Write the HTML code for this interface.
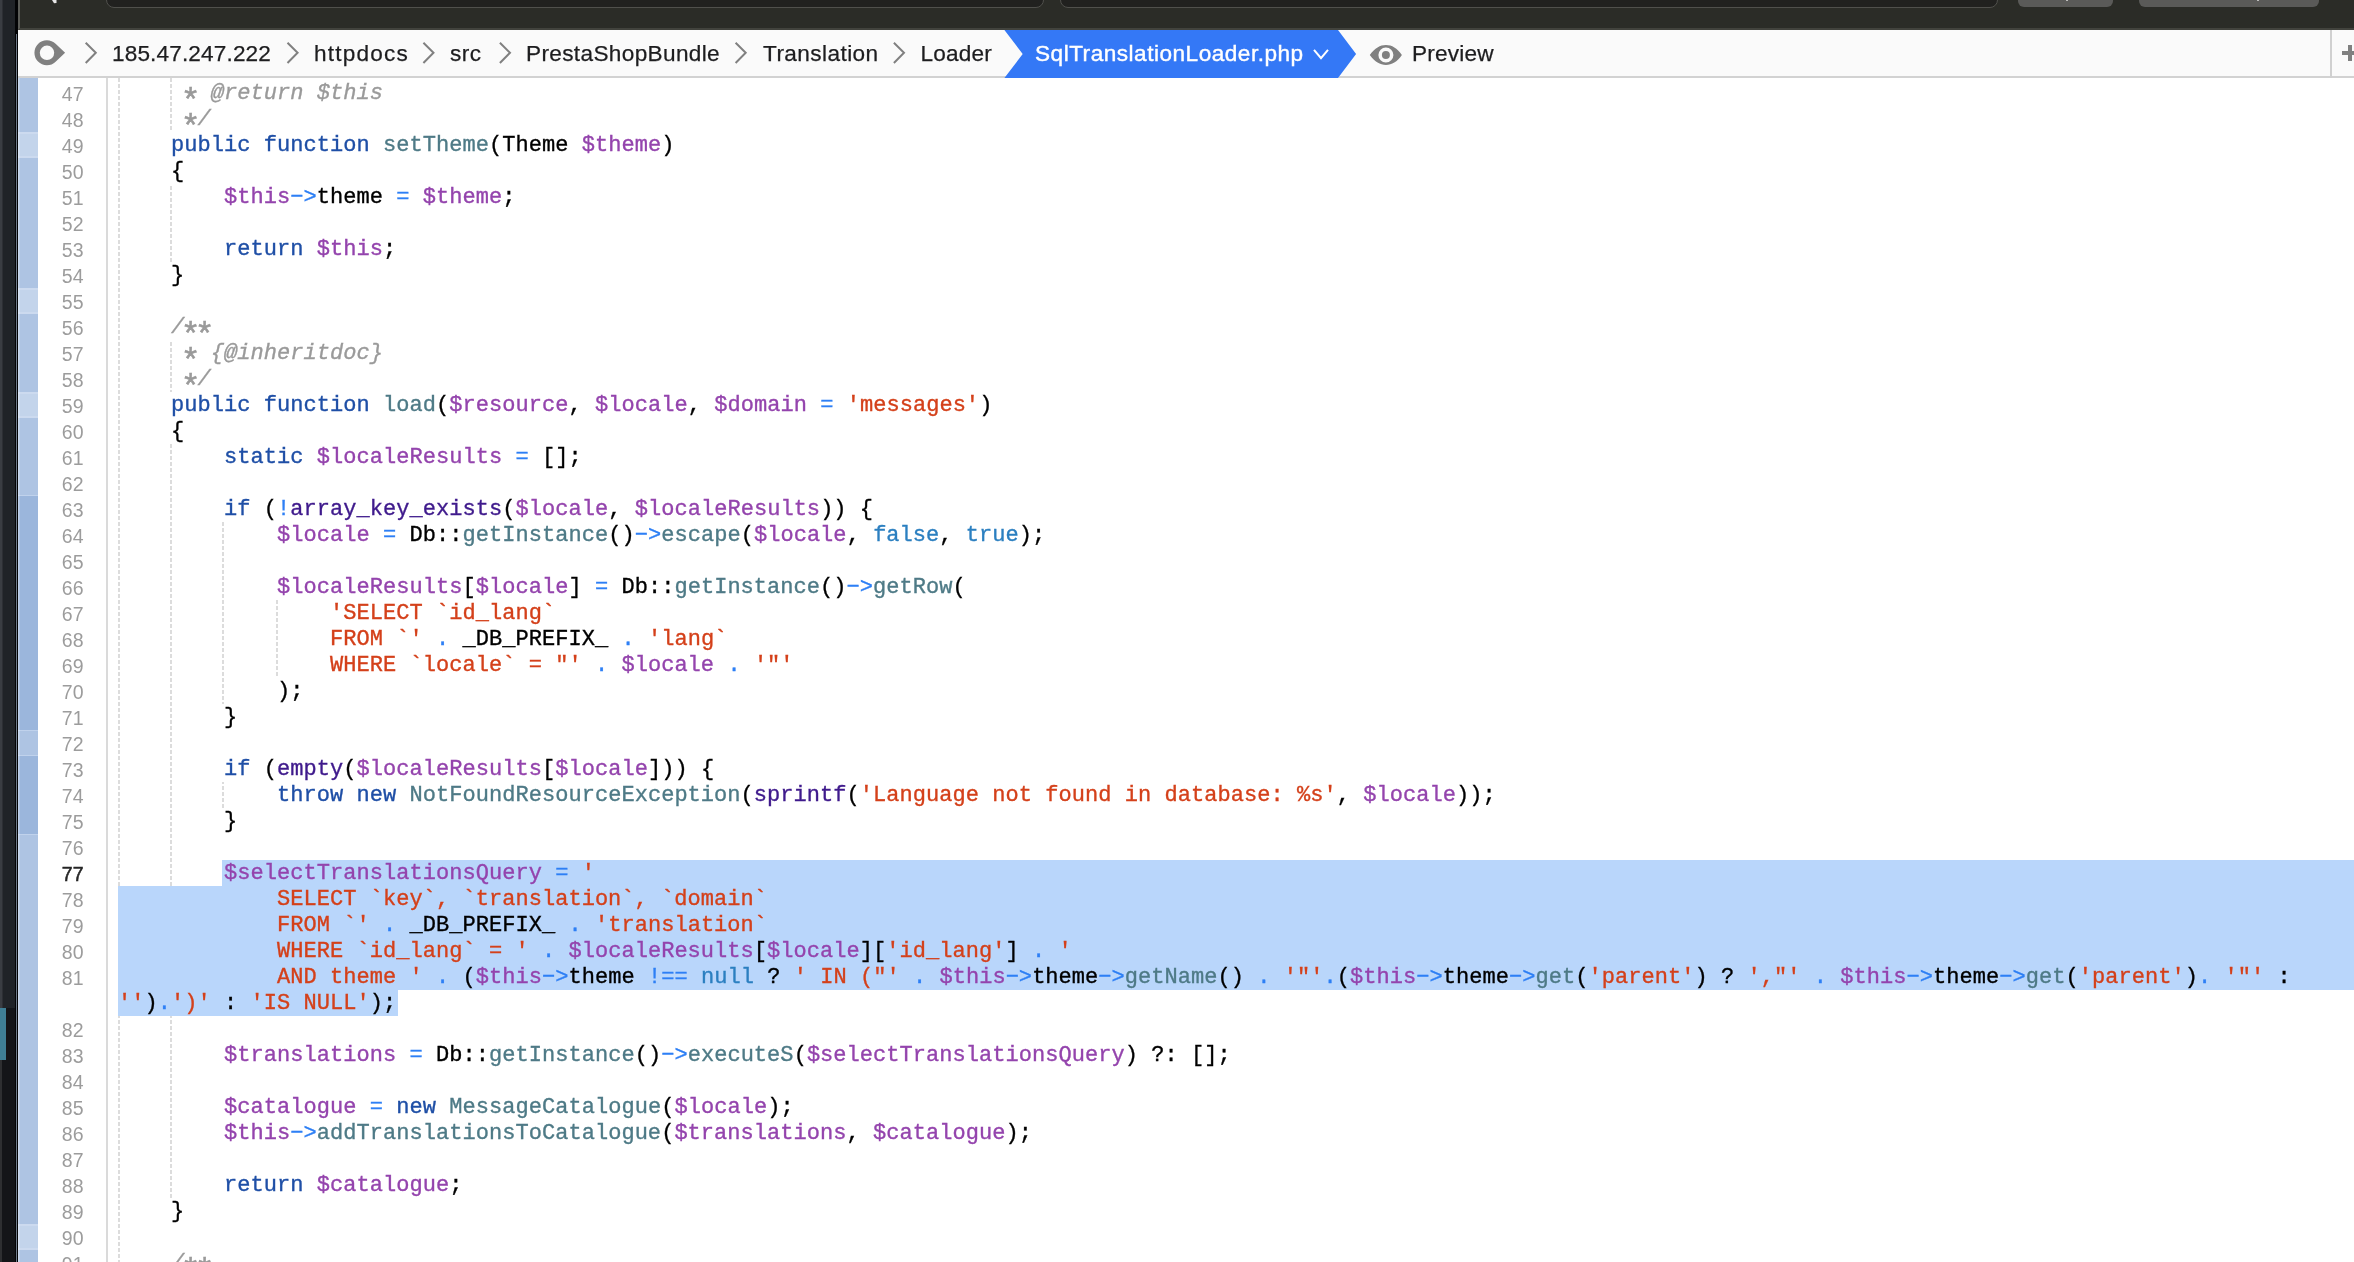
<!DOCTYPE html>
<html><head><meta charset="utf-8"><title>SqlTranslationLoader.php</title>
<style>
*{margin:0;padding:0;box-sizing:border-box}
html,body{width:2354px;height:1262px;overflow:hidden;background:#fff}
body{position:relative;will-change:transform;font-family:"Liberation Sans",sans-serif}
.abs{position:absolute}
#left{left:0;top:0;width:15px;height:1262px;background:#202327}
#left .a{left:0;top:0;width:2px;height:1008px;background:#3a3d42}
#left .b{left:0;top:1008px;width:15px;height:254px;background:#141518}
#left .t{left:0;top:1008px;width:6px;height:52px;background:#3f7f95}
#left .c{left:0;top:1060px;width:2px;height:202px;background:#2e2f31}
#edge{left:15px;top:0;width:3px;height:1262px;background:#030405}
#edge i{position:absolute;left:1px;top:34px;width:1px;height:1228px;background:#6f7a88}
#top{left:18px;top:0;width:2336px;height:30px;background:#2b2c27;border-bottom:2px solid #42433d;border-left:2px solid #5c5d58}
.fld{top:-10px;height:18px;background:#21211f;border:1px solid #50504c;border-radius:8px}
.btn{top:-10px;height:17px;background:#5a5a58;border-radius:6px}
#crumb{left:18px;top:30px;width:2336px;height:46px;background:#fafafa}
#crumbline{left:18px;top:76px;width:2336px;height:2px;background:#d2d2d2}
.bc{top:30px;-webkit-text-stroke:0.25px;height:47px;line-height:47px;font-size:22.6px;color:#1d1d1f;white-space:pre}
#gut{left:18px;top:78px;width:20px;height:1184px;background:#aec4e3}
#gutl{left:18px;top:78px;width:2px;height:1184px;background:linear-gradient(to right,rgba(255,255,255,.42),rgba(255,255,255,.12))}
.g1,.g3{position:absolute;left:18px;width:20px}
.g1{background:#c3d4eb;box-shadow:inset 0 2px 0 #ccdaef,inset 0 -2px 0 #ccdaef}
.g3{background:#9bb6dc;box-shadow:0 1px 0 #c0d2ec,0 -1px 0 #c0d2ec}
#gsep{left:106px;top:78px;width:2px;height:1184px;background:#dadada}
.num{position:absolute;left:38px;width:46px;text-align:right;height:26px;line-height:28px;font-size:19.5px;letter-spacing:0.3px;color:#9c9c9c}
.num.cur{color:#262626;-webkit-text-stroke:0.5px}
.gd{position:absolute;width:2px;background-image:linear-gradient(to bottom,#dcdcdc 0,#dcdcdc 4px,transparent 4px,transparent 6px);background-size:2px 6px;background-repeat:repeat-y}
.sel{position:absolute;background:#b9d6fb}
.ln{position:absolute;left:118px;margin-top:1px;letter-spacing:0.044px;-webkit-text-stroke:0.35px;height:26px;line-height:26px;font-family:"Liberation Mono",monospace;font-size:22px;white-space:pre;color:#000}
.k{color:#1f4fa6}.f{color:#4e7a86}.v{color:#9444ad}.o{color:#2d7ff5}.s{color:#d4401a}
.c{color:#9a9a9a;font-style:italic}.a{display:inline-block;font-style:normal;transform:translateY(9px) scale(1.5)}.b{color:#3f1a8c}.n{color:#2b7fc0}
</style></head><body>
<div id="left" class="abs"><div class="abs a"></div><div class="abs b"></div><div class="abs c"></div><div class="abs t"></div></div>
<div id="edge" class="abs"><i></i></div>
<div id="top" class="abs">
<div class="abs fld" style="left:86px;width:938px"></div>
<div class="abs fld" style="left:1040px;width:938px"></div>
<div class="abs btn" style="left:1998px;width:95px"></div>
<div class="abs btn" style="left:2119px;width:180px"></div>
</div>
<svg class="abs" style="left:50px;top:0" width="10" height="5" viewBox="0 0 10 5"><path d="M2 0 L6.5 0 L6.5 3 L4 3.2 Z" fill="#e8e8e8"/></svg>
<div class="abs" style="left:2066px;top:0;width:2px;height:1px;background:#bdbdbb"></div><div class="abs" style="left:2257px;top:0;width:2px;height:1px;background:#bdbdbb"></div>
<div id="crumb" class="abs"></div>
<div id="crumbline" class="abs"></div>
<!-- breadcrumb -->
<svg class="abs" style="left:0;top:0" width="2354" height="80" viewBox="0 0 2354 80"><path d="M85.7 42.7 L95.8 52.8 L85.7 63" fill="none" stroke="#808080" stroke-width="2"/><path d="M287.5 42.7 L297.6 52.8 L287.5 63" fill="none" stroke="#808080" stroke-width="2"/><path d="M423.4 42.7 L433.5 52.8 L423.4 63" fill="none" stroke="#808080" stroke-width="2"/><path d="M499.9 42.7 L510.0 52.8 L499.9 63" fill="none" stroke="#808080" stroke-width="2"/><path d="M735.6 42.7 L745.7 52.8 L735.6 63" fill="none" stroke="#808080" stroke-width="2"/><path d="M893.9 42.7 L904.0 52.8 L893.9 63" fill="none" stroke="#808080" stroke-width="2"/><path d="M55.6 43.8 A12.5 12.5 0 1 0 55.6 61.8 L65.1 52.8 Z M47 45.6 A7.2 7.2 0 1 1 47 60 A7.2 7.2 0 1 1 47 45.6 Z" fill="#808080" fill-rule="evenodd"/><path d="M1004.4 30 L1338 30 L1356.1 54 L1338 78 L1004.4 78 L1022.7 54 Z" fill="#3478f6"/><path d="M1314 49.9 L1321 58.1 L1328 49.9" fill="none" stroke="#fff" stroke-width="2"/><path d="M1369.8 55 C1375 48 1380 45 1385.9 45 C1392 45 1397 48 1401.9 55 C1397 62 1392 64.9 1385.9 64.9 C1380 64.9 1375 62 1369.8 55 Z M1385.9 47.5 A7.5 7.5 0 1 0 1385.9 62.5 A7.5 7.5 0 1 0 1385.9 47.5 Z" fill="#808080" fill-rule="evenodd"/><circle cx="1385.9" cy="55" r="4" fill="#808080"/></svg>
<div class="abs bc" style="left:112.0px;letter-spacing:0.14px">185.47.247.222</div>
<div class="abs bc" style="left:314.0px;letter-spacing:1.20px">httpdocs</div>
<div class="abs bc" style="left:450.0px;letter-spacing:0.50px">src</div>
<div class="abs bc" style="left:526.0px;letter-spacing:0.35px">PrestaShopBundle</div>
<div class="abs bc" style="left:763.0px;letter-spacing:0.42px">Translation</div>
<div class="abs bc" style="left:920.5px;letter-spacing:0.20px">Loader</div>
<div class="abs bc" style="left:1035px;color:#fff;letter-spacing:0.5px;-webkit-text-stroke:0.4px">SqlTranslationLoader.php</div>
<div class="abs bc" style="left:1412px;letter-spacing:0.2px">Preview</div>
<div class="abs" style="left:2330px;top:30px;width:2px;height:48px;background:#d0d0d0"></div>
<div class="abs" style="left:2342px;top:51px;width:12px;height:4px;background:#808080"></div>
<div class="abs" style="left:2348px;top:45px;width:4px;height:16px;background:#808080"></div>
<!-- gutter -->
<div id="gut" class="abs"></div>
<div class="g1" style="top:132px;height:26px"></div>
<div class="g1" style="top:288px;height:26px"></div>
<div class="g1" style="top:392px;height:26px"></div>
<div class="g1" style="top:1224px;height:26px"></div>
<div class="g3" style="top:496px;height:234px"></div>
<div class="g3" style="top:756px;height:78px"></div>
<div id="gutl" class="abs"></div>
<div id="gsep" class="abs"></div>
<div class="num" style="top:80px">47</div>
<div class="num" style="top:106px">48</div>
<div class="num" style="top:132px">49</div>
<div class="num" style="top:158px">50</div>
<div class="num" style="top:184px">51</div>
<div class="num" style="top:210px">52</div>
<div class="num" style="top:236px">53</div>
<div class="num" style="top:262px">54</div>
<div class="num" style="top:288px">55</div>
<div class="num" style="top:314px">56</div>
<div class="num" style="top:340px">57</div>
<div class="num" style="top:366px">58</div>
<div class="num" style="top:392px">59</div>
<div class="num" style="top:418px">60</div>
<div class="num" style="top:444px">61</div>
<div class="num" style="top:470px">62</div>
<div class="num" style="top:496px">63</div>
<div class="num" style="top:522px">64</div>
<div class="num" style="top:548px">65</div>
<div class="num" style="top:574px">66</div>
<div class="num" style="top:600px">67</div>
<div class="num" style="top:626px">68</div>
<div class="num" style="top:652px">69</div>
<div class="num" style="top:678px">70</div>
<div class="num" style="top:704px">71</div>
<div class="num" style="top:730px">72</div>
<div class="num" style="top:756px">73</div>
<div class="num" style="top:782px">74</div>
<div class="num" style="top:808px">75</div>
<div class="num" style="top:834px">76</div>
<div class="num cur" style="top:860px">77</div>
<div class="num" style="top:886px">78</div>
<div class="num" style="top:912px">79</div>
<div class="num" style="top:938px">80</div>
<div class="num" style="top:964px">81</div>
<div class="num" style="top:1016px">82</div>
<div class="num" style="top:1042px">83</div>
<div class="num" style="top:1068px">84</div>
<div class="num" style="top:1094px">85</div>
<div class="num" style="top:1120px">86</div>
<div class="num" style="top:1146px">87</div>
<div class="num" style="top:1172px">88</div>
<div class="num" style="top:1198px">89</div>
<div class="num" style="top:1224px">90</div>
<div class="num" style="top:1250px">91</div>
<!-- guides -->
<div class="gd" style="left:118px;top:78px;height:1184px;background-position:0 0px"></div>
<div class="gd" style="left:170px;top:78px;height:54px;background-position:0 0px"></div>
<div class="gd" style="left:170px;top:184px;height:78px;background-position:0 -4px"></div>
<div class="gd" style="left:170px;top:340px;height:52px;background-position:0 -4px"></div>
<div class="gd" style="left:170px;top:444px;height:754px;background-position:0 0px"></div>
<div class="gd" style="left:222px;top:522px;height:182px;background-position:0 0px"></div>
<div class="gd" style="left:276px;top:600px;height:78px;background-position:0 0px"></div>
<div class="gd" style="left:222px;top:782px;height:26px;background-position:0 -2px"></div>
<!-- selection -->
<div class="sel" style="left:222px;top:860px;width:2132px;height:26px"></div>
<div class="sel" style="left:118px;top:886px;width:2236px;height:104px"></div>
<div class="sel" style="left:118px;top:990px;width:280px;height:26px"></div>
<!-- code -->
<div class="ln" style="top:80px">     <span class="c"><i class="a">*</i> @return $this</span></div>
<div class="ln" style="top:106px">     <span class="c"><i class="a">*</i>/</span></div>
<div class="ln" style="top:132px">    <span class="k">public</span> <span class="k">function</span> <span class="f">setTheme</span>(Theme <span class="v">$theme</span>)</div>
<div class="ln" style="top:158px">    {</div>
<div class="ln" style="top:184px">        <span class="v">$this</span><span class="o">−&gt;</span>theme <span class="o">=</span> <span class="v">$theme</span>;</div>
<div class="ln" style="top:236px">        <span class="k">return</span> <span class="v">$this</span>;</div>
<div class="ln" style="top:262px">    }</div>
<div class="ln" style="top:314px">    <span class="c">/<i class="a">*</i><i class="a">*</i></span></div>
<div class="ln" style="top:340px">     <span class="c"><i class="a">*</i> {@inheritdoc}</span></div>
<div class="ln" style="top:366px">     <span class="c"><i class="a">*</i>/</span></div>
<div class="ln" style="top:392px">    <span class="k">public</span> <span class="k">function</span> <span class="f">load</span>(<span class="v">$resource</span>, <span class="v">$locale</span>, <span class="v">$domain</span> <span class="o">=</span> <span class="s">'messages'</span>)</div>
<div class="ln" style="top:418px">    {</div>
<div class="ln" style="top:444px">        <span class="k">static</span> <span class="v">$localeResults</span> <span class="o">=</span> [];</div>
<div class="ln" style="top:496px">        <span class="k">if</span> (<span class="o">!</span><span class="b">array_key_exists</span>(<span class="v">$locale</span>, <span class="v">$localeResults</span>)) {</div>
<div class="ln" style="top:522px">            <span class="v">$locale</span> <span class="o">=</span> Db::<span class="f">getInstance</span>()<span class="o">−&gt;</span><span class="f">escape</span>(<span class="v">$locale</span>, <span class="n">false</span>, <span class="n">true</span>);</div>
<div class="ln" style="top:574px">            <span class="v">$localeResults</span>[<span class="v">$locale</span>] <span class="o">=</span> Db::<span class="f">getInstance</span>()<span class="o">−&gt;</span><span class="f">getRow</span>(</div>
<div class="ln" style="top:600px">                <span class="s">'SELECT `id_lang`</span></div>
<div class="ln" style="top:626px">                <span class="s">FROM `'</span> <span class="o">.</span> _DB_PREFIX_ <span class="o">.</span> <span class="s">'lang`</span></div>
<div class="ln" style="top:652px">                <span class="s">WHERE `locale` = "'</span> <span class="o">.</span> <span class="v">$locale</span> <span class="o">.</span> <span class="s">'"'</span></div>
<div class="ln" style="top:678px">            );</div>
<div class="ln" style="top:704px">        }</div>
<div class="ln" style="top:756px">        <span class="k">if</span> (<span class="b">empty</span>(<span class="v">$localeResults</span>[<span class="v">$locale</span>])) {</div>
<div class="ln" style="top:782px">            <span class="k">throw</span> <span class="k">new</span> <span class="f">NotFoundResourceException</span>(<span class="b">sprintf</span>(<span class="s">'Language not found in database: %s'</span>, <span class="v">$locale</span>));</div>
<div class="ln" style="top:808px">        }</div>
<div class="ln" style="top:860px">        <span class="v">$selectTranslationsQuery</span> <span class="o">=</span> <span class="s">'</span></div>
<div class="ln" style="top:886px">            <span class="s">SELECT `key`, `translation`, `domain`</span></div>
<div class="ln" style="top:912px">            <span class="s">FROM `'</span> <span class="o">.</span> _DB_PREFIX_ <span class="o">.</span> <span class="s">'translation`</span></div>
<div class="ln" style="top:938px">            <span class="s">WHERE `id_lang` = '</span> <span class="o">.</span> <span class="v">$localeResults</span>[<span class="v">$locale</span>][<span class="s">'id_lang'</span>] <span class="o">.</span> <span class="s">'</span></div>
<div class="ln" style="top:964px">            <span class="s">AND theme '</span> <span class="o">.</span> (<span class="v">$this</span><span class="o">−&gt;</span>theme <span class="o">!==</span> <span class="n">null</span> ? <span class="s">' IN ("'</span> <span class="o">.</span> <span class="v">$this</span><span class="o">−&gt;</span>theme<span class="o">−&gt;</span><span class="f">getName</span>() <span class="o">.</span> <span class="s">'"'</span><span class="o">.</span>(<span class="v">$this</span><span class="o">−&gt;</span>theme<span class="o">−&gt;</span><span class="f">get</span>(<span class="s">'parent'</span>) ? <span class="s">',"'</span> <span class="o">.</span> <span class="v">$this</span><span class="o">−&gt;</span>theme<span class="o">−&gt;</span><span class="f">get</span>(<span class="s">'parent'</span>)<span class="o">.</span> <span class="s">'"'</span> :</div>
<div class="ln" style="top:990px"><span class="s">''</span>)<span class="o">.</span><span class="s">')'</span> : <span class="s">'IS NULL'</span>);</div>
<div class="ln" style="top:1042px">        <span class="v">$translations</span> <span class="o">=</span> Db::<span class="f">getInstance</span>()<span class="o">−&gt;</span><span class="f">executeS</span>(<span class="v">$selectTranslationsQuery</span>) ?: [];</div>
<div class="ln" style="top:1094px">        <span class="v">$catalogue</span> <span class="o">=</span> <span class="k">new</span> <span class="f">MessageCatalogue</span>(<span class="v">$locale</span>);</div>
<div class="ln" style="top:1120px">        <span class="v">$this</span><span class="o">−&gt;</span><span class="f">addTranslationsToCatalogue</span>(<span class="v">$translations</span>, <span class="v">$catalogue</span>);</div>
<div class="ln" style="top:1172px">        <span class="k">return</span> <span class="v">$catalogue</span>;</div>
<div class="ln" style="top:1198px">    }</div>
<div class="ln" style="top:1250px">    <span class="c">/<i class="a">*</i><i class="a">*</i></span></div>
</body></html>
